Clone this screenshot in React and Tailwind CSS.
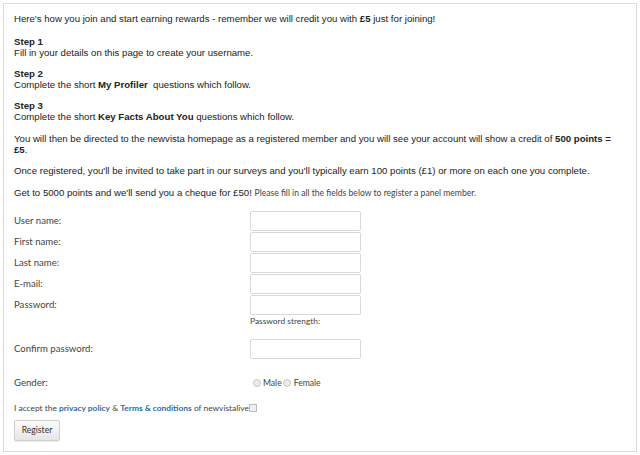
export default function App() {
  const fields = ["User name:", "First name:", "Last name:", "E-mail:", "Password:"];
  return (
    <div className="m-[3px] h-[449px] border border-[#dcdcdc] bg-white px-[10px] pt-[9px] text-[#222]">
      <div className="font-['Liberation_Sans',Arial,sans-serif] text-[9.65px] leading-[11px]">
        <p>
          Here's how you join and start earning rewards - remember we will credit you with <b>£5</b> just for joining!
        </p>
        <p className="mt-[12px]">
          <b>Step 1</b>
          <br />
          Fill in your details on this page to create your username.
        </p>
        <p className="mt-[10px]">
          <b>Step 2</b>
          <br />
          Complete the short <b>My Profiler</b>&nbsp; questions which follow.
        </p>
        <p className="mt-[10px]">
          <b>Step 3</b>
          <br />
          Complete the short <b>Key Facts About You</b> questions which follow.
        </p>
        <p className="mt-[11px]">
          You will then be directed to the newvista homepage as a registered member and you will see your account will show a credit of <b>500 points = £5</b>.
        </p>
        <p className="mt-[10px]">
          Once registered, you'll be invited to take part in our surveys and you'll typically earn 100 points (£1) or more on each one you complete.
        </p>
        <p className="mt-[11px]">
          Get to 5000 points and we'll send you a cheque for £50!{" "}
          <span className="font-['Lato','Open_Sans',sans-serif] text-[8.6px] text-[#444]">
            Please fill in all the fields below to register a panel member.
          </span>
        </p>
      </div>

      <div className="mt-[12px] font-['Lato','Open_Sans',sans-serif] text-[9.6px] text-[#444]">
        <div className="flex flex-col gap-[1px]">
          {fields.map((f) => (
            <div key={f} className="flex h-[20px] items-center">
              <label className="w-[236px]">{f}</label>
              <input className="h-[20px] w-[111px] rounded-[2px] border border-[#d9d9d9] bg-white" />
            </div>
          ))}
        </div>
        <div className="ml-[236px] mt-[1px] text-[8.4px] leading-[11px]">Password strength:</div>
        <div className="mt-[12px] flex h-[20px] items-center">
          <label className="w-[236px]">Confirm password:</label>
          <input className="h-[20px] w-[111px] rounded-[2px] border border-[#d9d9d9] bg-white" />
        </div>
        <div className="mt-[18px] flex h-[12px] items-center">
          <label className="w-[236px]">Gender:</label>
          <span className="flex items-center text-[8.6px]">
            <span className="ml-[3px] mr-[2px] inline-block h-[8px] w-[8px] rounded-full border border-[#c8c8c8] bg-[#ececec]" />
            Male
            <span className="ml-[1px] mr-[3px] inline-block h-[8px] w-[8px] rounded-full border border-[#c8c8c8] bg-[#ececec]" />
            Female
          </span>
        </div>
        <div className="mt-[13px] flex h-[12px] items-center text-[8.4px]">
          I accept the&nbsp;<a className="font-bold text-[#2b6cab]">privacy policy</a>&nbsp;&amp;&nbsp;
          <a className="font-bold text-[#2b6cab]">Terms &amp; conditions</a>&nbsp;of newvistalive
          <span className="inline-block h-[8px] w-[8px] border border-[#bcbcbc] bg-[#eeeeee]" />
        </div>
        <button className="mt-[6px] h-[21px] w-[46px] rounded-[2px] border border-[#d0d0d0] bg-gradient-to-b from-[#fbfbfb] to-[#e6e6e6] text-[8.6px] text-[#333] shadow-[0_1px_1px_rgba(0,0,0,0.08)]">
          Register
        </button>
      </div>
    </div>
  );
}
